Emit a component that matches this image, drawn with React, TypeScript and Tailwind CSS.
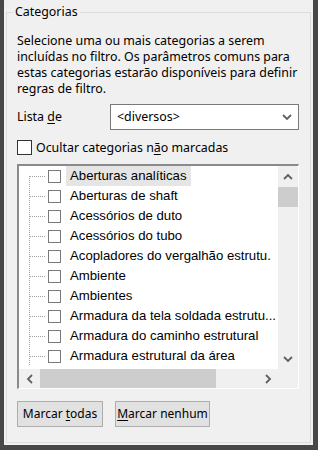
import React from "react";

const rows = [
  "Aberturas analíticas",
  "Aberturas de shaft",
  "Acessórios de duto",
  "Acessórios do tubo",
  "Acopladores do vergalhão estrutu.",
  "Ambiente",
  "Ambientes",
  "Armadura da tela soldada estrutu...",
  "Armadura do caminho estrutural",
  "Armadura estrutural da área",
];

function Chevron({ dir }: { dir: "up" | "down" | "left" | "right" }) {
  const pts: Record<string, string> = {
    up: "1,6 5,2 9,6",
    down: "1,2 5,6 9,2",
    left: "6,1 2,5 6,9",
    right: "2,1 6,5 2,9",
  };
  const horiz = dir === "left" || dir === "right";
  return (
    <svg width={horiz ? 8 : 10} height={horiz ? 10 : 8} viewBox={horiz ? "0 0 8 10" : "0 0 10 8"}>
      <polyline points={pts[dir]} fill="none" stroke="#606060" strokeWidth="1.8" />
    </svg>
  );
}

function Tree({ first }: { first: boolean }) {
  return (
    <svg width="26" height="20" className="shrink-0">
      <line x1="10.5" y1={first ? 10 : 0} x2="10.5" y2="20" stroke="#a0a0a0" strokeDasharray="1 1" />
      <line x1="11" y1="10.5" x2="26" y2="10.5" stroke="#a0a0a0" strokeDasharray="1 1" />
    </svg>
  );
}

export default function App() {
  return (
    <div
      className="w-[318px] h-[450px] bg-[#f0f0f0] border-l-4 border-r-[5px] border-b-[5px] border-[#474747] flex flex-col text-[12.4px] text-black"
      style={{ fontFamily: '"Noto Sans", "Open Sans", sans-serif' }}
    >
      <div className="relative mt-[12px] ml-[2px] mr-[2px] mb-[2px] flex-1 border border-[#dcdcdc] pl-[10px] pr-[11px] pt-[20px] flex flex-col">
        <span className="absolute left-[6px] top-[-9px] px-[2px] bg-[#f0f0f0] leading-[16px]">Categorias</span>
        <div className="leading-[16px] whitespace-nowrap">
          Selecione uma ou mais categorias a serem
          <br />
          incluídas no filtro. Os parâmetros comuns para
          <br />
          estas categorias estarão disponíveis para definir
          <br />
          regras de filtro.
        </div>
        <div className="mt-[7px] flex items-center h-[26px]">
          <span className="w-[93px] leading-[16px]">
            Lista <span className="underline underline-offset-2">d</span>e
          </span>
          <div className="flex-1 h-[26px] bg-white border border-[#7a7a7a] flex items-center pl-[6px] pr-[6px]">
            <span className="flex-1 leading-[16px]">&lt;diversos&gt;</span>
            <Chevron dir="down" />
          </div>
        </div>
        <div className="mt-[10px] flex items-center h-[15px]">
          <div className="w-[15px] h-[15px] border border-[#333333] bg-white shrink-0" />
          <span className="ml-[4px] leading-[16px] whitespace-nowrap">
            Ocultar categorias n<span className="underline underline-offset-2">ã</span>o marcadas
          </span>
        </div>
        <div className="mt-[9px] h-[225px] border-l-2 border-t-2 border-l-[#8a8a8a] border-t-[#8a8a8a] border-r border-b border-r-white border-b-white flex flex-col bg-white">
          <div className="flex flex-1 min-h-0">
            <div
              className="flex-1 min-w-0 overflow-hidden text-[13.2px]"
              style={{ fontFamily: '"Liberation Sans", Arial, sans-serif' }}
            >
              {rows.map((r, i) => (
                <div key={r} className="h-[20px] flex items-center whitespace-nowrap">
                  <Tree first={i === 0} />
                  <div className="ml-[3px] w-[13px] h-[13px] border border-[#7a7a7a] bg-white shrink-0" />
                  <span
                    className={
                      "ml-[5px] px-[4px] h-[20px] flex items-center leading-[16px] " +
                      (i === 0 ? "bg-[#e5e5e5]" : "")
                    }
                  >
                    {r}
                  </span>
                </div>
              ))}
            </div>
            <div className="w-[20px] bg-[#f0f0f0] flex flex-col shrink-0">
              <div className="h-[21px] flex items-center justify-center">
                <Chevron dir="up" />
              </div>
              <div className="h-[20px] bg-[#cdcdcd]" />
              <div className="flex-1" />
              <div className="h-[21px] flex items-center justify-center">
                <Chevron dir="down" />
              </div>
            </div>
          </div>
          <div className="h-[19px] flex shrink-0">
            <div className="flex-1 bg-[#f0f0f0] flex">
              <div className="w-[21px] flex items-center justify-center">
                <Chevron dir="left" />
              </div>
              <div className="w-[176px] bg-[#cdcdcd]" />
              <div className="flex-1" />
              <div className="w-[21px] flex items-center justify-center">
                <Chevron dir="right" />
              </div>
            </div>
            <div className="w-[20px] bg-[#f0f0f0]" />
          </div>
        </div>
        <div className="mt-[12px] flex gap-[12px] text-[12px]">
          <button className="w-[86px] h-[26px] bg-[#e1e1e1] border border-[#adadad] leading-[16px] whitespace-nowrap">
            Marcar <span className="underline underline-offset-2">t</span>odas
          </button>
          <button className="w-[95px] h-[26px] bg-[#e1e1e1] border border-[#adadad] leading-[16px] whitespace-nowrap">
            <span className="underline underline-offset-2">M</span>arcar nenhum
          </button>
        </div>
      </div>
    </div>
  );
}
